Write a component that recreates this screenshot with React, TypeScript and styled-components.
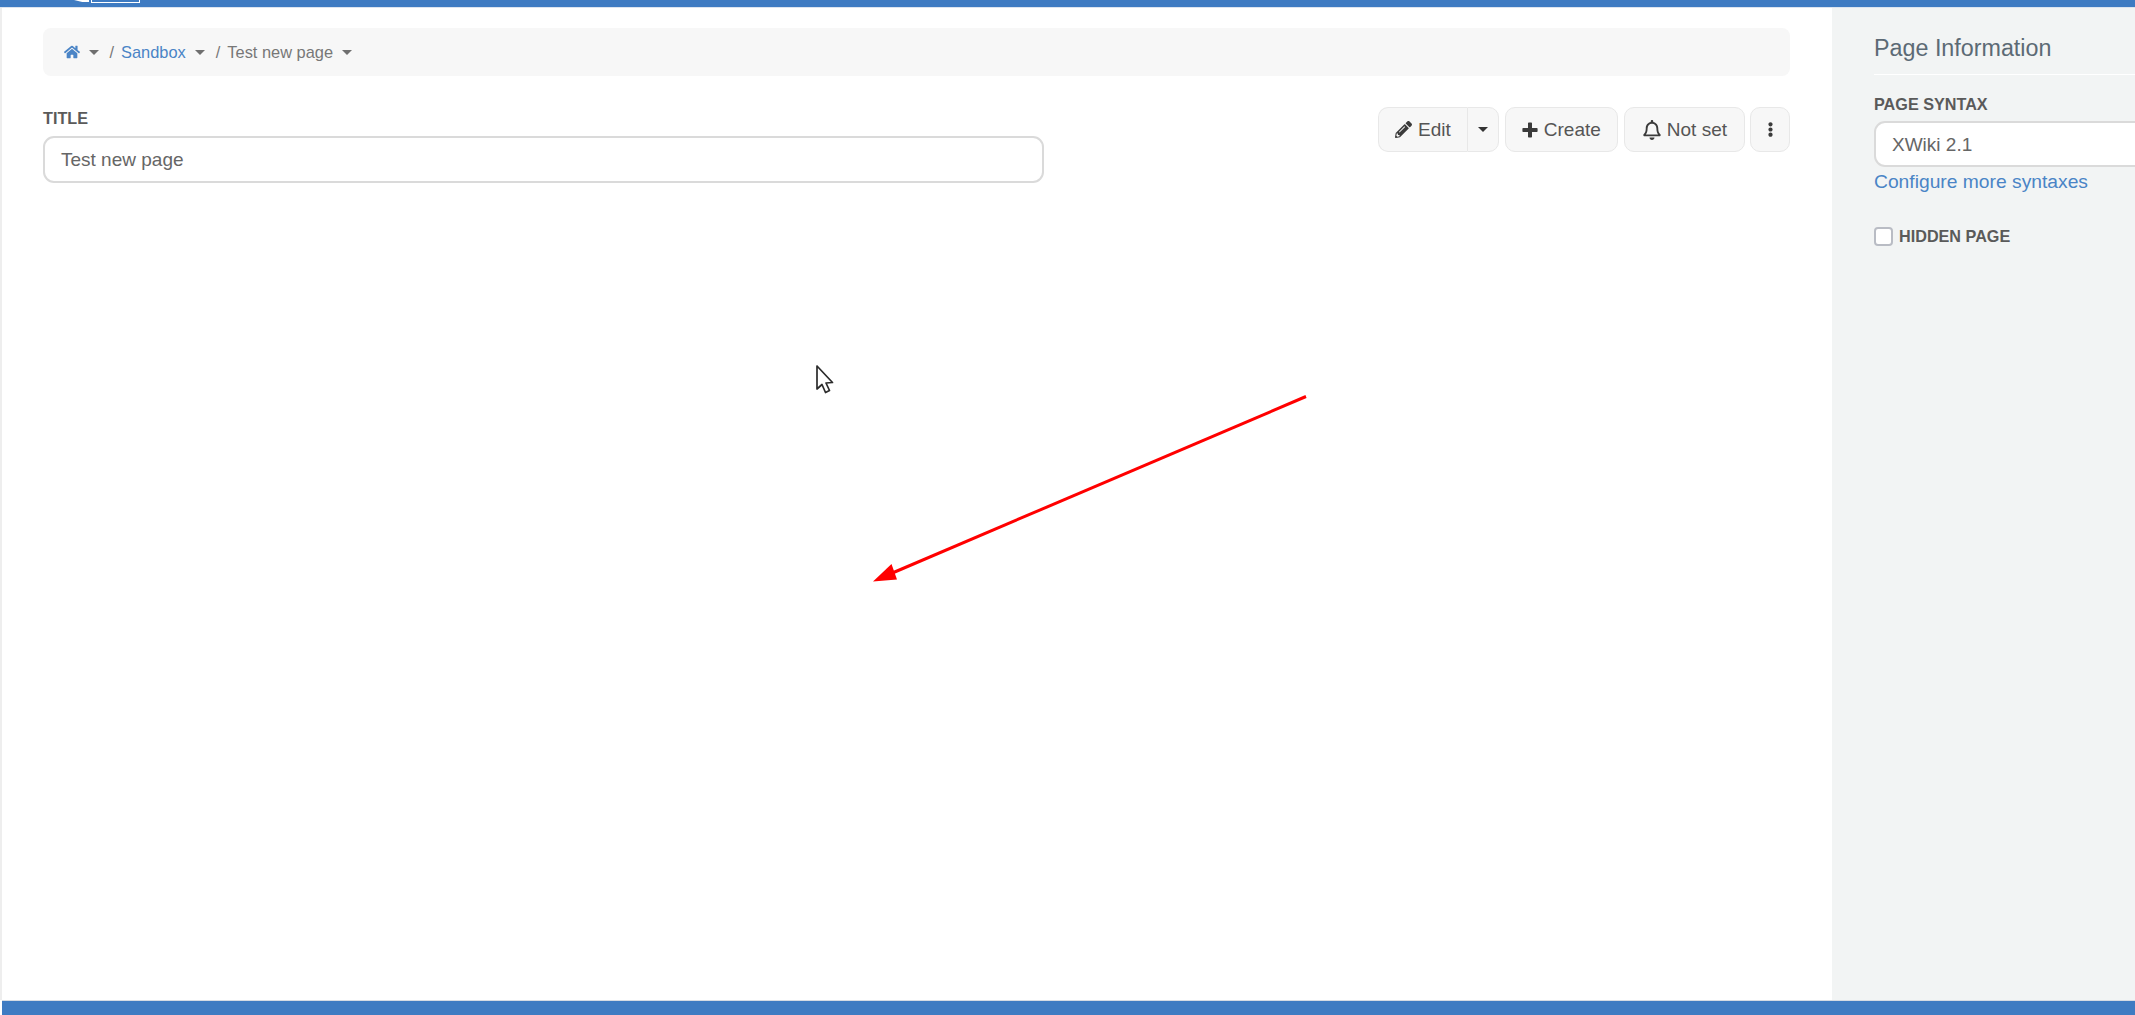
import styled, { createGlobalStyle } from "styled-components";
import { FaHome, FaPencilAlt, FaRegBell, FaEllipsisV } from "react-icons/fa";

const GlobalStyle = createGlobalStyle`
  html, body {
    margin: 0;
    padding: 0;
    height: 100%;
    overflow: hidden;
    background: #fff;
    font-family: "Liberation Sans", Arial, sans-serif;
  }
`;

const Page = styled.div`
  position: relative;
  width: 2135px;
  height: 1015px;
  display: flex;
  flex-direction: column;
  overflow: hidden;
`;

const TopBar = styled.div`
  height: 7px;
  flex: none;
  background: #3e7bc2;
  position: relative;
  z-index: 1;
  box-shadow: 0 1px 0 #dbe4ef;
`;

const LogoScrap = styled.div`
  position: absolute;
  left: 74px;
  top: 0;
  display: flex;
  gap: 2px;
`;

const LogoWhite = styled.span`
  width: 15px;
  height: 2px;
  background: #fff;
  clip-path: polygon(0 0, 100% 0, 100% 100%, 55% 100%);
`;

const LogoOutline = styled.span`
  box-sizing: border-box;
  width: 49px;
  height: 3px;
  background: #3e7bc2;
  border: 1px solid #fff;
  border-top: none;
`;

const Middle = styled.div`
  flex: 1;
  min-height: 0;
  display: flex;
`;

const Main = styled.main`
  width: 1832px;
  flex: none;
  box-sizing: border-box;
  border-left: 2px solid #eeeeee;
  padding: 21px 42px 0 41px;
`;

const Breadcrumb = styled.nav`
  height: 48px;
  box-sizing: border-box;
  background: #f7f7f7;
  border-radius: 8px;
  padding: 0 20.5px;
  display: flex;
  align-items: center;
  font-size: 16.4px;
  color: #777;
`;

const Crumb = styled.span<{ $link?: boolean }>`
  color: ${(p) => (p.$link ? "#4a84c6" : "#777")};
  display: inline-flex;
  align-items: center;
`;

const Caret = styled.span<{ $dark?: boolean }>`
  display: inline-block;
  width: 0;
  height: 0;
  margin-left: 9px;
  border-left: 5px solid transparent;
  border-right: 5px solid transparent;
  border-top: 5px solid ${(p) => (p.$dark ? "#333" : "#6f6f6f")};
`;

const Separator = styled.span`
  margin: 0 7px 0 11px;
  color: #777;
`;

const EditorHead = styled.div`
  margin-top: 31px;
  display: flex;
  justify-content: space-between;
  align-items: flex-start;
`;

const TitleField = styled.div`
  width: 1001px;
`;

const Label = styled.div`
  font-size: 16.2px;
  line-height: 18px;
  font-weight: 700;
  color: #5a5a5a;
  text-transform: uppercase;
  margin-top: 2px;
`;

const Input = styled.div`
  box-sizing: border-box;
  height: 47px;
  margin-top: 9px;
  background: #fff;
  border: 2px solid #dadada;
  border-radius: 11px;
  padding: 0 16px;
  display: flex;
  align-items: center;
  font-size: 19px;
  color: #666;
`;

const Toolbar = styled.div`
  display: flex;
  gap: 6px;
`;

const Button = styled.button`
  box-sizing: border-box;
  height: 45px;
  padding: 0 16px;
  display: inline-flex;
  align-items: center;
  gap: 6px;
  background: #f7f7f7;
  border: 1px solid #e8e8e8;
  border-radius: 10px;
  font-family: inherit;
  font-size: 19px;
  color: #555;
  svg {
    color: #3b3b3b;
    flex: none;
  }
`;

const ButtonGroup = styled.div`
  display: flex;
  ${Button}:first-child {
    border-radius: 10px 0 0 10px;
    border-right: none;
  }
  ${Button}:last-child {
    border-radius: 0 10px 10px 0;
    padding: 0 10px;
  }
  ${Button}:last-child ${Caret} {
    margin-left: 0;
  }
`;

const BellButton = styled(Button)`
  padding: 0 17px;
  gap: 5px;
`;

const IconButton = styled(Button)`
  width: 40px;
  padding: 0;
  justify-content: center;
  margin-left: -1px;
`;

const Sidebar = styled.aside`
  flex: 1;
  min-width: 0;
  background: #f2f4f4;
  padding-left: 42px;
`;

const PanelTitle = styled.h2`
  margin: 0;
  padding: 23px 0 8px;
  font-size: 23.3px;
  line-height: 36px;
  font-weight: 400;
  color: #5c6a75;
  border-bottom: 1px solid #fff;
`;

const SidebarLabel = styled(Label)`
  margin-top: 20px;
`;

const SyntaxInput = styled(Input)`
  width: 320px;
  height: 46px;
  margin-top: 8px;
  padding-top: 2px;
`;

const ConfigureLink = styled.a`
  display: block;
  margin-top: 2px;
  font-size: 19.25px;
  line-height: 26px;
  color: #4a84c6;
`;

const CheckRow = styled.label`
  margin-top: 32px;
  display: flex;
  align-items: center;
  gap: 6px;
  font-size: 16.2px;
  font-weight: 700;
  color: #5a5a5a;
  text-transform: uppercase;
`;

const CheckBox = styled.span`
  box-sizing: border-box;
  width: 19px;
  height: 19px;
  background: #fff;
  border: 2px solid #b9bcc4;
  border-radius: 4px;
`;

const BottomBar = styled.div`
  height: 14px;
  flex: none;
  background: #3e7bc2;
  border-top: 1px solid #d5dbe3;
  margin-left: 2px;
`;

const ArrowOverlay = styled.svg`
  position: absolute;
  left: 860px;
  top: 390px;
  width: 450px;
  height: 200px;
  pointer-events: none;
`;

const Pointer = styled.svg`
  position: absolute;
  left: 815px;
  top: 364px;
  width: 20px;
  height: 32px;
  pointer-events: none;
`;

export default function App() {
  return (
    <Page>
      <GlobalStyle />
      <TopBar>
        <LogoScrap>
          <LogoWhite />
          <LogoOutline />
        </LogoScrap>
      </TopBar>
      <Middle>
        <Main>
          <Breadcrumb>
            <Crumb $link>
              <FaHome size={16} />
            </Crumb>
            <Caret />
            <Separator>/</Separator>
            <Crumb $link>Sandbox</Crumb>
            <Caret />
            <Separator>/</Separator>
            <Crumb>Test new page</Crumb>
            <Caret />
          </Breadcrumb>
          <EditorHead>
            <TitleField>
              <Label>Title</Label>
              <Input>Test new page</Input>
            </TitleField>
            <Toolbar>
              <ButtonGroup>
                <Button>
                  <FaPencilAlt size={17} />
                  Edit
                </Button>
                <Button>
                  <Caret $dark />
                </Button>
              </ButtonGroup>
              <Button>
                <svg width="16" height="16" viewBox="0 0 16 16" fill="currentColor">
                  <path d="M6 1.2a.8.8 0 0 1 .8-.8h2.4a.8.8 0 0 1 .8.8V6h4.8a.8.8 0 0 1 .8.8v2.4a.8.8 0 0 1-.8.8H10v4.8a.8.8 0 0 1-.8.8H6.800a.8.8 0 0 1-.8-.8V10H1.200a.8.8 0 0 1-.8-.8V6.800a.8.8 0 0 1 .8-.8H6z" />
                </svg>
                Create
              </Button>
              <BellButton>
                <FaRegBell size={20} />
                Not set
              </BellButton>
              <IconButton>
                <FaEllipsisV size={15} />
              </IconButton>
            </Toolbar>
          </EditorHead>
        </Main>
        <Sidebar>
          <PanelTitle>Page Information</PanelTitle>
          <SidebarLabel>Page Syntax</SidebarLabel>
          <SyntaxInput>XWiki 2.1</SyntaxInput>
          <ConfigureLink>Configure more syntaxes</ConfigureLink>
          <CheckRow>
            <CheckBox />
            Hidden Page
          </CheckRow>
        </Sidebar>
      </Middle>
      <BottomBar />
      <ArrowOverlay viewBox="860 390 450 200">
        <line x1="1306" y1="396.500" x2="890" y2="574" stroke="#ff0000" strokeWidth="3" />
        <polygon points="873,581.500 891.500,564 897,579.500" fill="#ff0000" />
      </ArrowOverlay>
      <Pointer viewBox="0 0 20 32">
        <path
          d="M2 2 L2 25 L7 20.500 L10.500 28.500 L14.500 26.500 L11 19 L17.500 18.500 Z"
          fill="#fff"
          stroke="#2b2b2b"
          strokeWidth="1.7"
          strokeLinejoin="round"
        />
      </Pointer>
    </Page>
  );
}
